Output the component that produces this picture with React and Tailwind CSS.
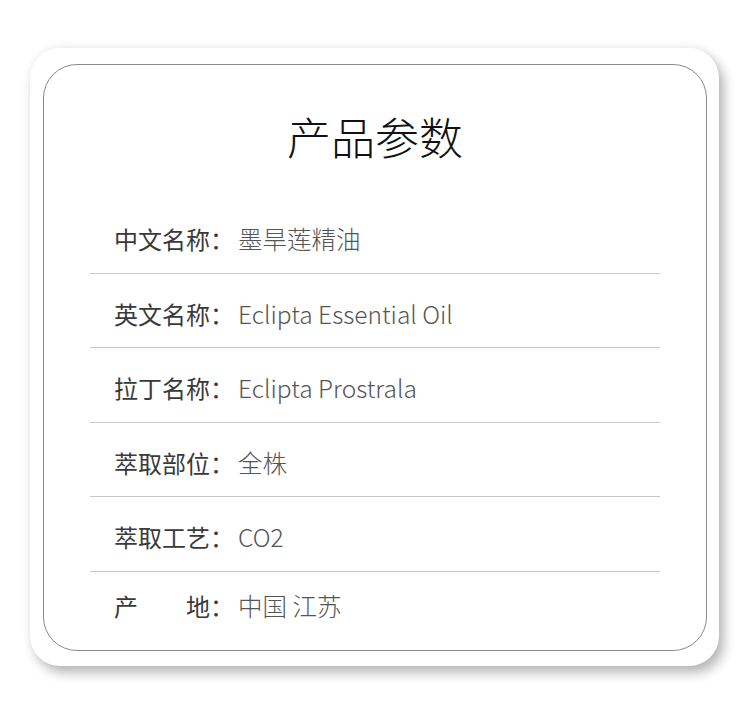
import React from "react";

const rows = [
  { label: "中文名称：", value: "墨旱莲精油" },
  { label: "英文名称：", value: "Eclipta Essential Oil" },
  { label: "拉丁名称：", value: "Eclipta Prostrala" },
  { label: "萃取部位：", value: "全株" },
  { label: "萃取工艺：", value: "CO2" },
  { label: "产　　地：", value: "中国 江苏" },
];

const App = () => {
  return (
    <div
      className="w-[750px] h-[721px] bg-white pt-[48px] pl-[30px]"
      style={{ fontFamily: '"Noto Sans CJK SC", "Noto Sans", sans-serif' }}
    >
      <div className="w-[689px] h-[618px] bg-white rounded-[30px] shadow-[5px_7px_12px_rgba(0,0,0,0.28),0_-2px_10px_rgba(0,0,0,0.05)] pt-[16px] pl-[13px]">
        <div className="w-[664px] h-[587px] rounded-[34px] border border-[#8a8a8a] flex flex-col">
          {/* Title */}
          <h1 className="mt-[41px] text-center text-[44px] leading-[60px] text-[#111] font-light">
            产品参数
          </h1>

          {/* Params */}
          <div className="mt-[33px] mx-[46px]">
            {rows.map((row, i) => {
              const last = i === rows.length - 1;
              return (
                <div
                  key={row.label}
                  className={
                    "flex items-center pl-[24px] pb-[16.5px] leading-[34px] " +
                    (last ? "pt-[17px]" : "pt-[23px] border-b border-[#c8c8c8]")
                  }
                >
                  <span className="text-[#3a3a3a] text-[24px] w-[124px] whitespace-pre">{row.label}</span>
                  <span className="text-[#555] text-[24.5px] font-light">{row.value}</span>
                </div>
              );
            })}
          </div>
        </div>
      </div>
    </div>
  );
};

export default App;
